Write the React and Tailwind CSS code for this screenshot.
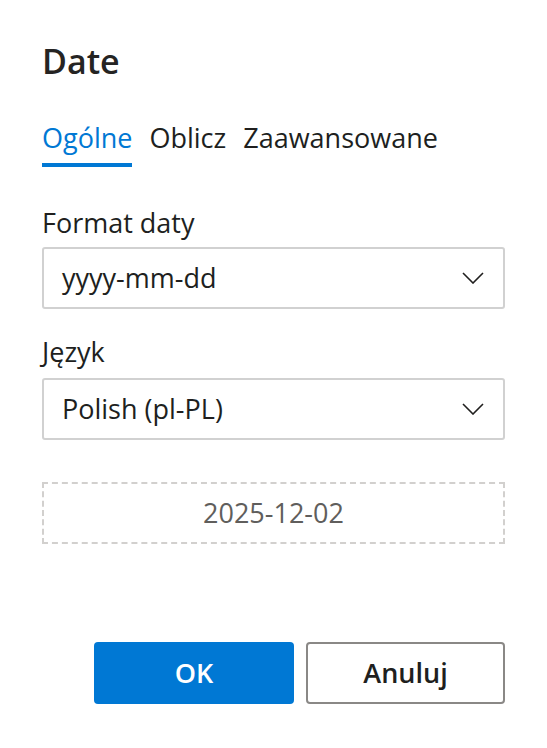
import React, { useState } from "react";

const tabs = ["Ogólne", "Oblicz", "Zaawansowane"];

// chevron used by both dropdowns
const Chevron = () => (
  <svg width="22" height="12" viewBox="0 0 22 12" fill="none">
    <path d="M1 1 L11 11 L21 1" stroke="#201f1e" strokeWidth="1.6" />
  </svg>
);

const Dropdown = ({ value }) => (
  <div className="flex items-center justify-between h-[62px] border-2 border-[#d1d1d1] rounded-[3px] pl-[18px] pr-[19px] bg-white">
    <span className="text-[27px] leading-[36px] text-[#201f1e]">{value}</span>
    <Chevron />
  </div>
);

const App = () => {
  const [active, setActive] = useState(0);

  return (
    <div
      className="w-[547px] h-[748px] bg-white px-[42px] pt-[38px]"
      style={{ fontFamily: '"Segoe UI", "Open Sans", sans-serif' }}
    >
      {/* title */}
      <h1 className="text-[34px] leading-[46px] font-semibold text-[#252423]">Date</h1>

      {/* tabs */}
      <div className="flex gap-[17px] mt-[36px]">
        {tabs.map((t, i) => (
          <button key={t} className="flex flex-col items-stretch" onClick={() => setActive(i)}>
            <span
              className={
                i === active
                  ? "text-[27px] leading-[36px] text-[#0078d4]"
                  : "text-[27px] leading-[36px] text-[#201f1e]"
              }
            >
              {t}
            </span>
            <span className={i === active ? "mt-[7px] h-[4px] bg-[#0078d4]" : "mt-[7px] h-[4px]"} />
          </button>
        ))}
      </div>

      {/* date format */}
      <div className="mt-[38px] text-[27px] leading-[36px] text-[#201f1e]">Format daty</div>
      <div className="mt-[6px]">
        <Dropdown value="yyyy-mm-dd" />
      </div>

      {/* language */}
      <div className="mt-[25px] text-[27px] leading-[36px] text-[#201f1e]">Język</div>
      <div className="mt-[8px]">
        <Dropdown value="Polish (pl-PL)" />
      </div>

      {/* preview */}
      <div className="mt-[42px] h-[62px] border-2 border-dashed border-[#d2d0ce] flex items-center justify-center">
        <span className="text-[27px] leading-[36px] text-[#605e5c]">2025-12-02</span>
      </div>

      {/* footer buttons */}
      <div className="mt-[98px] flex justify-end gap-[12px]">
        <button className="w-[200px] h-[62px] rounded-[4px] bg-[#0078d4] text-white text-[27px] font-semibold">
          OK
        </button>
        <button className="w-[199px] h-[62px] rounded-[4px] border-2 border-[#8a8886] bg-white text-[#201f1e] text-[27px] font-semibold">
          Anuluj
        </button>
      </div>
    </div>
  );
};

export default App;
